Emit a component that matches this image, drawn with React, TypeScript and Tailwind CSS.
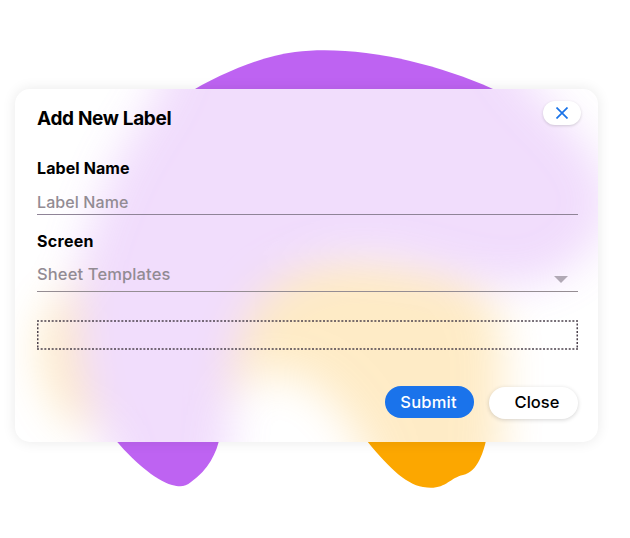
import React from 'react';

function Backdrop() {
  return (
    <svg className="pointer-events-none absolute left-0 top-0" width="630" height="538" viewBox="0 0 630 538" aria-hidden="true">
      <path fill="#be63f2" d="M185 95C219 74 262 56 295 52C355 45 430 61 493 89L500 95Z" />
      <path fill="#be63f2" d="M112 436C133 461 155 480 172 485C180 487 185 487 191 482C208 470 217 453 220 436Z" />
      <path fill="#fca700" d="M363 436C386 465 405 484 423 487C445 491 449 478 463 475C478 472 484 451 487 436Z" />
    </svg>
  );
}

function FrostedGlow() {
  return (
    <svg className="pointer-events-none absolute left-0 top-0" width="583" height="354" viewBox="15 89 583 354" aria-hidden="true">
      <defs>
        <filter id="glow" x="-200" y="-100" width="1030" height="800" filterUnits="userSpaceOnUse" colorInterpolationFilters="sRGB">
          <feGaussianBlur stdDeviation="22" />
        </filter>
      </defs>
      <g opacity="0.22">
        <path filter="url(#glow)" fill="#fca700" d="M62 295C29 330 34 380 72 425L235 385C270 360 314 376 340 410L370 455L370 540L490 540L500 440C502 380 508 330 486 290L460 257L280 237Z" />
        <path filter="url(#glow)" fill="#be63f2" d="M190 0L160 89C142 120 112 160 101 200C77 246 73 300 77 350C80 390 90 415 108 445L130 540L210 540L229 440C230 400 233 350 248 318C268 280 310 260 360 259C410 258 460 283 510 286C560 286 603 251 611 205C607 163 572 125 533 89L470 0Z" />
      </g>
    </svg>
  );
}

export default function App() {
  return (
    <main className="relative h-[538px] w-[630px] overflow-hidden bg-white pl-[15px] pt-[89px] font-['Inter','Liberation_Sans',sans-serif] text-black">
      <Backdrop />
      <section className="relative h-[353px] w-[583px] rounded-[15px] bg-white shadow-[0_0_14px_rgba(0,0,0,0.09)]">
        <div className="absolute inset-0 overflow-hidden rounded-[15px]"><FrostedGlow /></div>
        <div className="relative flex h-full flex-col pl-[22px] pr-5">
          <header className="flex h-[64px] items-start justify-between pt-3">
            <h1 className="mt-1 text-[19px] leading-7 font-bold tracking-[-0.33px]">Add New Label</h1>
            <button aria-label="Dismiss" className="-mr-[3px] flex h-6 w-[38px] items-center justify-center rounded-full bg-white shadow-[0_1px_3px_rgba(0,0,0,0.16)]">
              <svg width="12" height="12" viewBox="0 0 12 12" fill="none" stroke="#1a73e8" strokeWidth="1.7"><path d="M.5.5l11 11M11.5.5l-11 11" /></svg>
            </button>
          </header>
          <label className="mt-[3px] h-6 text-[16px] leading-6 font-bold tracking-[0.1px]">Label Name</label>
          <div className="mt-[10px] h-[25px] border-b border-[#8f8497] text-[16px] leading-6 font-medium tracking-[0.1px] text-[#928b93]">Label Name</div>
          <label className="mt-[14px] h-6 text-[16px] leading-6 font-bold tracking-[0.3px]">Screen</label>
          <div className="mt-[9px] flex h-[30px] items-start justify-between border-b border-[#958d93] text-[16.5px] leading-6 font-medium text-[#928b93]">
            <span className="tracking-[0.13px]">Sheet Templates</span>
            <svg className="mr-[10px] mt-[14px]" width="14" height="7" viewBox="0 0 14 7"><path d="M0 0h14L7 7Z" fill="#b1a9b5" /></svg>
          </div>
          <svg className="mt-7 h-[30px] w-[541px] shrink-0" viewBox="0 0 541 30" fill="none" stroke="#4b414c" strokeWidth="1.5" strokeDasharray="2 1.667"><path d="M0 1H541M0 29H541M.75 3.6V28M540.25 3.6V28" /></svg>
          <footer className="mt-9 flex items-start justify-end gap-[15px]">
            <button className="h-8 w-[89px] rounded-full bg-[#1a73eb] pr-[2px] text-[16.5px] font-medium tracking-[0.2px] text-white">Submit</button>
            <button className="mt-px h-8 w-[89px] rounded-full bg-white pb-[2px] pl-[7px] text-[16.5px] font-medium shadow-[0_1px_4px_rgba(0,0,0,0.17)]">Close</button>
          </footer>
        </div>
      </section>
    </main>
  );
}
